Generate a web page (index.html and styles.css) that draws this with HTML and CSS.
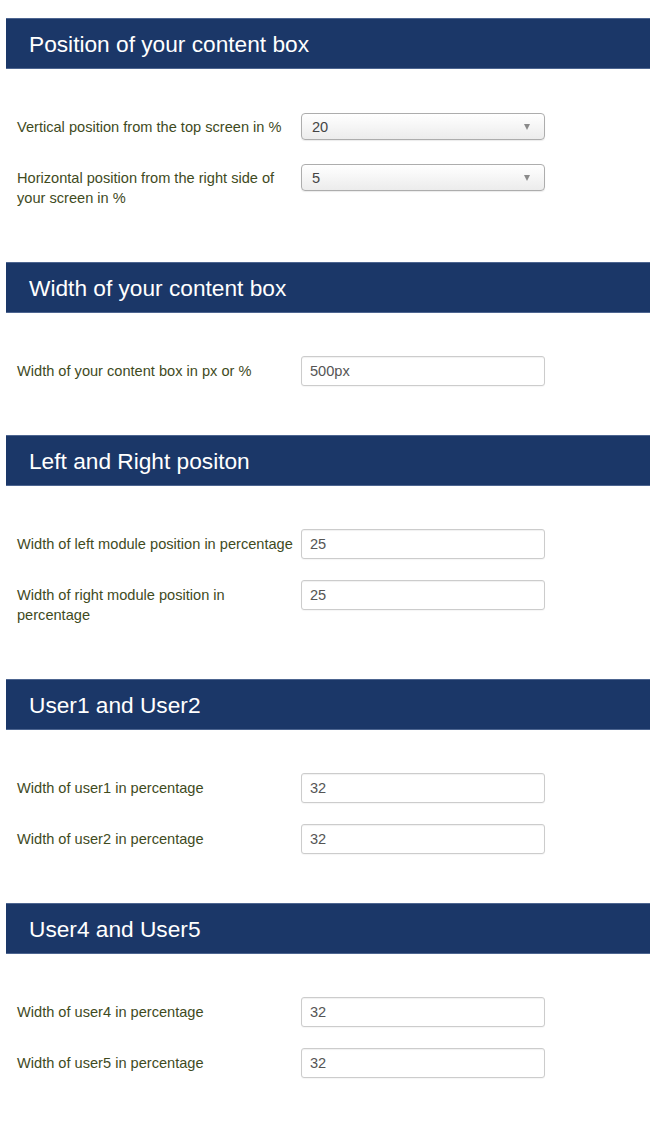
FILE: index.html
```html
<!DOCTYPE html>
<html lang="en">
<head>
<meta charset="utf-8">
<title>Layout settings</title>
<link rel="stylesheet" href="styles.css">
</head>
<body>
<div class="page">
  <section class="panel">
    <h2 class="panel-title">Position of your content box</h2>
    <div class="panel-body">
      <div class="row">
        <label class="row-label">Vertical position from the top screen in %</label>
        <div class="control"><div class="select"><span>20</span><span class="caret"></span></div></div>
      </div>
      <div class="row">
        <label class="row-label">Horizontal position from the right side of your screen in %</label>
        <div class="control"><div class="select"><span>5</span><span class="caret"></span></div></div>
      </div>
    </div>
  </section>

  <section class="panel">
    <h2 class="panel-title">Width of your content box</h2>
    <div class="panel-body">
      <div class="row">
        <label class="row-label">Width of your content box in px or %</label>
        <div class="control"><input class="input" type="text" value="500px"></div>
      </div>
    </div>
  </section>

  <section class="panel">
    <h2 class="panel-title">Left and Right positon</h2>
    <div class="panel-body">
      <div class="row">
        <label class="row-label">Width of left module position in percentage</label>
        <div class="control"><input class="input" type="text" value="25"></div>
      </div>
      <div class="row">
        <label class="row-label">Width of right module position in percentage</label>
        <div class="control"><input class="input" type="text" value="25"></div>
      </div>
    </div>
  </section>

  <section class="panel">
    <h2 class="panel-title">User1 and User2</h2>
    <div class="panel-body">
      <div class="row">
        <label class="row-label">Width of user1 in percentage</label>
        <div class="control"><input class="input" type="text" value="32"></div>
      </div>
      <div class="row">
        <label class="row-label">Width of user2 in percentage</label>
        <div class="control"><input class="input" type="text" value="32"></div>
      </div>
    </div>
  </section>

  <section class="panel">
    <h2 class="panel-title">User4 and User5</h2>
    <div class="panel-body">
      <div class="row">
        <label class="row-label">Width of user4 in percentage</label>
        <div class="control"><input class="input" type="text" value="32"></div>
      </div>
      <div class="row">
        <label class="row-label">Width of user5 in percentage</label>
        <div class="control"><input class="input" type="text" value="32"></div>
      </div>
    </div>
  </section>
</div>
</body>
</html>
```

FILE: styles.css
```css
* { box-sizing: border-box; }

html, body {
  margin: 0;
  padding: 0;
  background: #ffffff;
}

body {
  font-family: "Liberation Sans", Arial, Helvetica, sans-serif;
}

.page {
  margin-left: 6px;
  padding-top: 18px;
  width: 644px;
}

.panel-title {
  margin: 0;
  height: 51px;
  background: #1b3768;
  border-top: 1px solid #4d6590;
  border-bottom: 1px solid #4d6590;
  color: #ffffff;
  font-weight: normal;
  font-size: 22.7px;
  line-height: 50px;
  padding-left: 23px;
}

.panel-body {
  padding: 43px 0 49px 11px;
  display: flex;
  flex-direction: column;
  gap: 21px;
}

.row {
  display: grid;
  grid-template-columns: 280px 244px;
  column-gap: 4px;
  align-items: start;
}

.row-label {
  color: #3f4b1e;
  font-size: 14.6px;
  line-height: 20px;
  padding: 5px 0 5px 0;
}

.control {
  height: 30px;
}

.select {
  margin-top: 1px;
  height: 27px;
  border: 1px solid #adadad;
  border-radius: 4px;
  background: linear-gradient(#ffffff, #ececec);
  box-shadow: 0 1px 1px rgba(0,0,0,0.08);
  display: flex;
  align-items: center;
  justify-content: space-between;
  padding: 0 14px 0 10px;
  font-size: 14.6px;
  color: #444444;
}

.caret {
  width: 0;
  height: 0;
  border-left: 3.5px solid transparent;
  border-right: 3.5px solid transparent;
  border-top: 6px solid #8a8a8a;
}

.input {
  display: block;
  width: 244px;
  height: 30px;
  margin: 0;
  border: 1px solid #cccccc;
  border-radius: 3px;
  box-shadow: inset 0 1px 1px rgba(0,0,0,0.06), 0 1px 1px rgba(0,0,0,0.04);
  padding: 0 8px;
  font-family: "Liberation Sans", Arial, Helvetica, sans-serif;
  font-size: 14.6px;
  color: #555555;
  background: #ffffff;
}
```
